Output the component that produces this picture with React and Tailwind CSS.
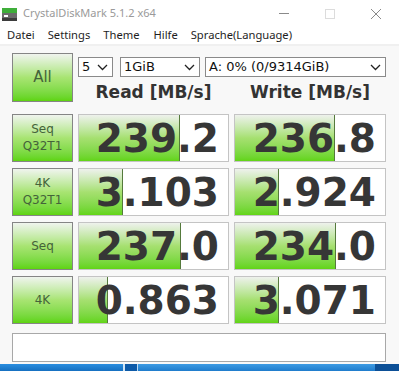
import React from "react";

const rows = [
  { label: ["Seq", "Q32T1"], read: "239.2", readFill: 101, write: "236.8", writeFill: 100 },
  { label: ["4K", "Q32T1"], read: "3.103", readFill: 44, write: "2.924", writeFill: 44 },
  { label: ["Seq"], read: "237.0", readFill: 102, write: "234.0", writeFill: 101 },
  { label: ["4K"], read: "0.863", readFill: 29, write: "3.071", writeFill: 44 },
];

const ui = { fontFamily: '"Noto Sans", "Open Sans", sans-serif' };
const dv = { fontFamily: '"DejaVu Sans", Verdana, sans-serif' };

function Chevron() {
  return (
    <svg width="11" height="7" viewBox="0 0 11 7" className="shrink-0">
      <polyline points="1,1 5.5,5.5 10,1" fill="none" stroke="#222" strokeWidth="1.3" />
    </svg>
  );
}

function Select({ value, width }) {
  return (
    <div
      className={`h-[20px] ${width} bg-white border border-[#8a8a8a] flex items-center justify-between pl-[3px] pr-[4px] text-[13px] text-[#111]`}
      style={dv}
    >
      <span>{value}</span>
      <Chevron />
    </div>
  );
}

function GreenButton({ children, big }) {
  return (
    <div
      className={`w-[61px] ${big ? "h-[49px]" : "h-[48px]"} border border-[#858585] bg-gradient-to-b from-[#f0f4ee] via-[#a8e472] to-[#5ed40c] flex flex-col items-center justify-center text-[#44633a] leading-[17px]`}
      style={dv}
    >
      {children}
    </div>
  );
}

function Value({ value, fill, width }) {
  return (
    <div className={`relative ${width} h-[48px] bg-white border border-[#c4c4c4] overflow-hidden`}>
      <div
        className="absolute left-0 top-0 bottom-0 bg-gradient-to-b from-[#eef1ec] via-[#a6e070] to-[#62d414] border-r border-[#557a3c]"
        style={{ width: fill }}
      />
      <div
        className="relative h-full flex items-center justify-end pr-[9px] text-[39px] font-bold text-[#363636] leading-none"
        style={dv}
      >
        {value}
      </div>
    </div>
  );
}

export default function App() {
  return (
    <div className="w-[399px] h-[371px] overflow-hidden bg-white flex flex-col" style={ui}>
      {/* title bar */}
      <div className="h-[27px] bg-white flex items-center shrink-0">
        <svg width="15" height="13" viewBox="0 0 15 13" className="ml-[2px] mt-[1px]">
          <rect x="0" y="0" width="15" height="5" fill="#3fae3a" />
          <rect x="0" y="5" width="15" height="8" fill="#6b6b6b" />
          <rect x="0" y="10" width="15" height="3" fill="#3c3c3c" />
          <rect x="2" y="7" width="4" height="2" fill="#ffffff" />
        </svg>
        <span className="ml-[6px] text-[11px] text-[#9a9a9a]">CrystalDiskMark 5.1.2 x64</span>
        <div className="ml-auto flex items-center h-full">
          <div className="w-[46px] flex justify-center">
            <div className="w-[10px] h-px bg-[#8a8a8a]" />
          </div>
          <div className="w-[46px] flex justify-center">
            <div className="w-[10px] h-[10px] border border-[#dcdcdc]" />
          </div>
          <div className="w-[46px] flex justify-center">
            <svg width="12" height="12" viewBox="0 0 12 12">
              <path d="M1 1 L11 11 M11 1 L1 11" stroke="#8a8a8a" strokeWidth="1" />
            </svg>
          </div>
        </div>
      </div>

      {/* menu */}
      <div className="h-[17px] bg-white flex items-center text-[11.2px] text-[#1e1e1e] shrink-0">
        <span className="ml-[7px]">Datei</span>
        <span className="ml-[13px]">Settings</span>
        <span className="ml-[13px]">Theme</span>
        <span className="ml-[14px]">Hilfe</span>
        <span className="ml-[13px]">Sprache(Language)</span>
      </div>
      <div className="h-[2px] bg-[#f0f0f0] shrink-0" />

      {/* body */}
      <div className="flex-1 bg-[#f8f8f8] pl-[12px] pt-[7px] flex flex-col">
        <div className="flex gap-[5px]">
          <GreenButton big>
            <span className="text-[15px]">All</span>
          </GreenButton>
          <div className="flex flex-col">
            <div className="flex mt-[4px]">
              <Select value="5" width="w-[35px]" />
              <div className="ml-[7px]">
                <Select value="1GiB" width="w-[80px]" />
              </div>
              <div className="ml-[5px]">
                <Select value="A: 0% (0/9314GiB)" width="w-[181px]" />
              </div>
            </div>
            <div className="flex h-[31px] items-center text-[17px] font-bold text-[#333]" style={dv}>
              <div className="w-[151px] text-center">Read [MB/s]</div>
              <div className="w-[152px] ml-[5px] text-center">Write [MB/s]</div>
            </div>
          </div>
        </div>

        <div className="flex flex-col gap-[6px] mt-[6px]">
          {rows.map((r, i) => (
            <div key={i} className="flex gap-[5px]">
              <GreenButton>
                {r.label.map((l) => (
                  <span key={l} className="text-[12px]">{l}</span>
                ))}
              </GreenButton>
              <Value value={r.read} fill={r.readFill} width="w-[151px]" />
              <Value value={r.write} fill={r.writeFill} width="w-[152px]" />
            </div>
          ))}
        </div>

        <div className="mt-[9px] w-[374px] h-[29px] bg-white border border-[#a8a8a8]" />
      </div>

      {/* taskbar */}
      <div className="h-[7px] shrink-0 flex">
        <div className="w-[123px] bg-gradient-to-b from-[#2a8ee0] to-[#1670c0]" />
        <div className="w-[2px] bg-[#cfe4f5]" />
        <div className="w-[12px] bg-[#0d5aa8]" />
        <div className="w-[1px] bg-[#bcd8f0]" />
        <div className="flex-1 bg-gradient-to-b from-[#3d9be3] to-[#1f7ccc]" />
        <div className="w-[24px] bg-[#0c4f96]" />
      </div>
    </div>
  );
}
